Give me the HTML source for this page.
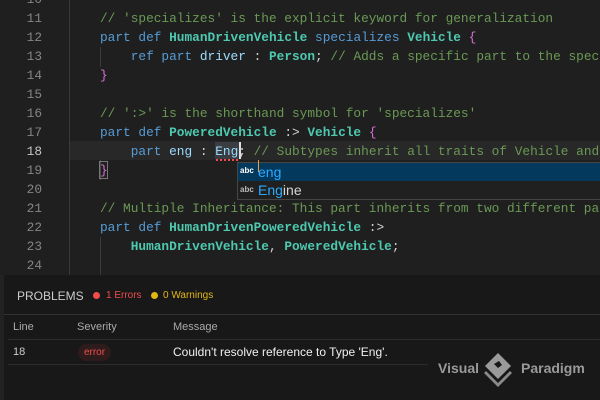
<!DOCTYPE html>
<html><head><meta charset="utf-8"><style>
*{margin:0;padding:0;box-sizing:border-box}
html,body{width:600px;height:400px;overflow:hidden}
body{background:#1f1f1f;position:relative;font-family:"Liberation Sans",sans-serif}
.ln{position:absolute;left:0;width:42px;text-align:right;font:12.8px "Liberation Mono",monospace;color:#858585;line-height:19px}
.cd{position:absolute;left:100px;width:500px;overflow:hidden;white-space:pre;font:12.8px "Liberation Mono",monospace;color:#d4d4d4;line-height:19px}
.c{color:#6a9955}.k{color:#569cd6}.t{color:#4ec9b0;font-weight:bold}.v{color:#9cdcfe}.b{color:#da70d6}
.abs{position:absolute}
</style></head><body>
<div class="abs" style="left:69px;top:0;width:1px;height:275px;background:#3a3a3a"></div>
<div class="abs" style="left:100px;top:47px;width:1px;height:20px;background:#3a3a3a"></div>
<div class="abs" style="left:100px;top:142px;width:1px;height:38px;background:#4a4a4a"></div>
<div class="abs" style="left:100px;top:237px;width:1px;height:38px;background:#3a3a3a"></div>
<div class="abs" style="left:70px;top:141px;width:530px;height:19px;background:#282828"></div>
<div class="abs" style="left:215px;top:142px;width:24px;height:17px;background:#3a3d41"></div>
<div class="abs" style="left:239px;top:142px;width:2px;height:17px;background:#e0e0e0"></div>
<div class="abs" style="left:99px;top:161px;width:9px;height:18px;border:1px solid #777"></div>
<div class="abs" style="left:216px;top:158px;width:22px;height:3px;border-bottom:2px dotted #f14c4c"></div>

<div class="ln" style="top:-10px">10</div>
<div class="ln" style="top:9px">11</div>
<div class="ln" style="top:28px">12</div>
<div class="ln" style="top:47px">13</div>
<div class="ln" style="top:66px">14</div>
<div class="ln" style="top:85px">15</div>
<div class="ln" style="top:104px">16</div>
<div class="ln" style="top:123px">17</div>
<div class="ln" style="top:142px;color:#c6c6c6">18</div>
<div class="ln" style="top:161px">19</div>
<div class="ln" style="top:180px">20</div>
<div class="ln" style="top:199px">21</div>
<div class="ln" style="top:218px">22</div>
<div class="ln" style="top:237px">23</div>
<div class="ln" style="top:256px">24</div>

<div class="cd" style="top:9px"><span class="c">// 'specializes' is the explicit keyword for generalization</span></div>
<div class="cd" style="top:28px"><span class="k">part def</span> <span class="t">HumanDrivenVehicle</span> <span class="k">specializes</span> <span class="t">Vehicle</span> <span class="b">{</span></div>
<div class="cd" style="top:47px">    <span class="k">ref part</span> <span class="v">driver</span> : <span class="t">Person</span>; <span class="c">// Adds a specific part to the specialized</span></div>
<div class="cd" style="top:66px"><span class="b">}</span></div>
<div class="cd" style="top:104px"><span class="c">// ':&gt;' is the shorthand symbol for 'specializes'</span></div>
<div class="cd" style="top:123px"><span class="k">part def</span> <span class="t">PoweredVehicle</span> :&gt; <span class="t">Vehicle</span> <span class="b">{</span></div>
<div class="cd" style="top:142px">    <span class="k">part</span> <span class="v">eng</span> : <span class="v">Eng</span>; <span class="c">// Subtypes inherit all traits of Vehicle and</span></div>
<div class="cd" style="top:161px"><span class="b">}</span></div>
<div class="cd" style="top:199px"><span class="c">// Multiple Inheritance: This part inherits from two different parents</span></div>
<div class="cd" style="top:218px"><span class="k">part def</span> <span class="t">HumanDrivenPoweredVehicle</span> :&gt;</div>
<div class="cd" style="top:237px">    <span class="t">HumanDrivenVehicle</span>, <span class="t">PoweredVehicle</span>;</div>

<div class="abs" style="left:237px;top:162px;width:363px;height:38px;background:#202020;border:1px solid #454545;border-right:none"></div>
<div class="abs" style="left:238px;top:163px;width:362px;height:18px;background:#04395e"></div>
<div class="abs" style="left:240px;top:166px;font:bold 8px 'Liberation Sans',sans-serif;color:#fff">abc</div>
<div class="abs" style="left:240px;top:185px;font:bold 8px 'Liberation Sans',sans-serif;color:#bbb">abc</div>
<div class="abs" style="left:258px;top:163px;font:14px 'Liberation Sans',sans-serif;color:#2aaaff;line-height:18px">eng</div>
<div class="abs" style="left:258px;top:181px;font:14px 'Liberation Sans',sans-serif;color:#d4d4d4;line-height:19px"><span style="color:#2aaaff">Eng</span>ine</div>
<div class="abs" style="left:258px;top:160px;width:1px;height:12px;background:#e8a050"></div>

<div class="abs" style="left:0;top:275px;width:600px;height:125px;background:#181818"></div>
<div class="abs" style="left:0;top:275px;width:4px;height:125px;background:#222"></div>
<div class="abs" style="left:17px;top:289px;font:12px 'Liberation Sans',sans-serif;color:#cccccc">PROBLEMS</div>
<div class="abs" style="left:93px;top:292px;width:7px;height:7px;border-radius:50%;background:#f14c4c"></div>
<div class="abs" style="left:106px;top:290px;font:10px 'Liberation Sans',sans-serif;color:#f14c4c">1 Errors</div>
<div class="abs" style="left:151px;top:292px;width:7px;height:7px;border-radius:50%;background:#e2b714"></div>
<div class="abs" style="left:163px;top:290px;font:10px 'Liberation Sans',sans-serif;color:#e2b714">0 Warnings</div>
<div class="abs" style="left:4px;top:314px;width:596px;height:1px;background:#333"></div>
<div class="abs" style="left:13px;top:321px;font:11px 'Liberation Sans',sans-serif;color:#aaa">Line</div>
<div class="abs" style="left:77px;top:321px;font:11px 'Liberation Sans',sans-serif;color:#aaa">Severity</div>
<div class="abs" style="left:173px;top:321px;font:11px 'Liberation Sans',sans-serif;color:#aaa">Message</div>
<div class="abs" style="left:8px;top:339px;width:592px;height:1px;background:#2c2c2c"></div>
<div class="abs" style="left:13px;top:346px;font:11px 'Liberation Sans',sans-serif;color:#ccc">18</div>
<div class="abs" style="left:78px;top:344px;width:33px;height:17px;border-radius:9px;background:#2e1c1c;font:10px 'Liberation Sans',sans-serif;color:#f14c4c;text-align:center;line-height:17px">error</div>
<div class="abs" style="left:173px;top:345px;font:12px 'Liberation Sans',sans-serif;color:#f0f0f0">Couldn't resolve reference to Type 'Eng'.</div>
<div class="abs" style="left:8px;top:364px;width:420px;height:1px;background:#2c2c2c"></div>

<div class="abs" style="left:438px;top:360px;font:bold 14px 'Liberation Sans',sans-serif;color:#9a9a9a">Visual</div>
<div class="abs" style="left:521px;top:360px;font:bold 14px 'Liberation Sans',sans-serif;color:#9a9a9a">Paradigm</div>
<svg class="abs" style="left:483px;top:352px" width="30" height="36" viewBox="0 0 30 36">
<path d="M15 1 L28 14 L15 27 L2 14 Z" fill="#9a9a9a"/>
<path d="M11 12 L16 9 L19 13 L15 16 Z" fill="#181818"/>
<path d="M3 19 L15 31 L27 19 L29 21 L15 35 L1 21 Z" fill="#8a8a8a"/>
</svg>
</body></html>
